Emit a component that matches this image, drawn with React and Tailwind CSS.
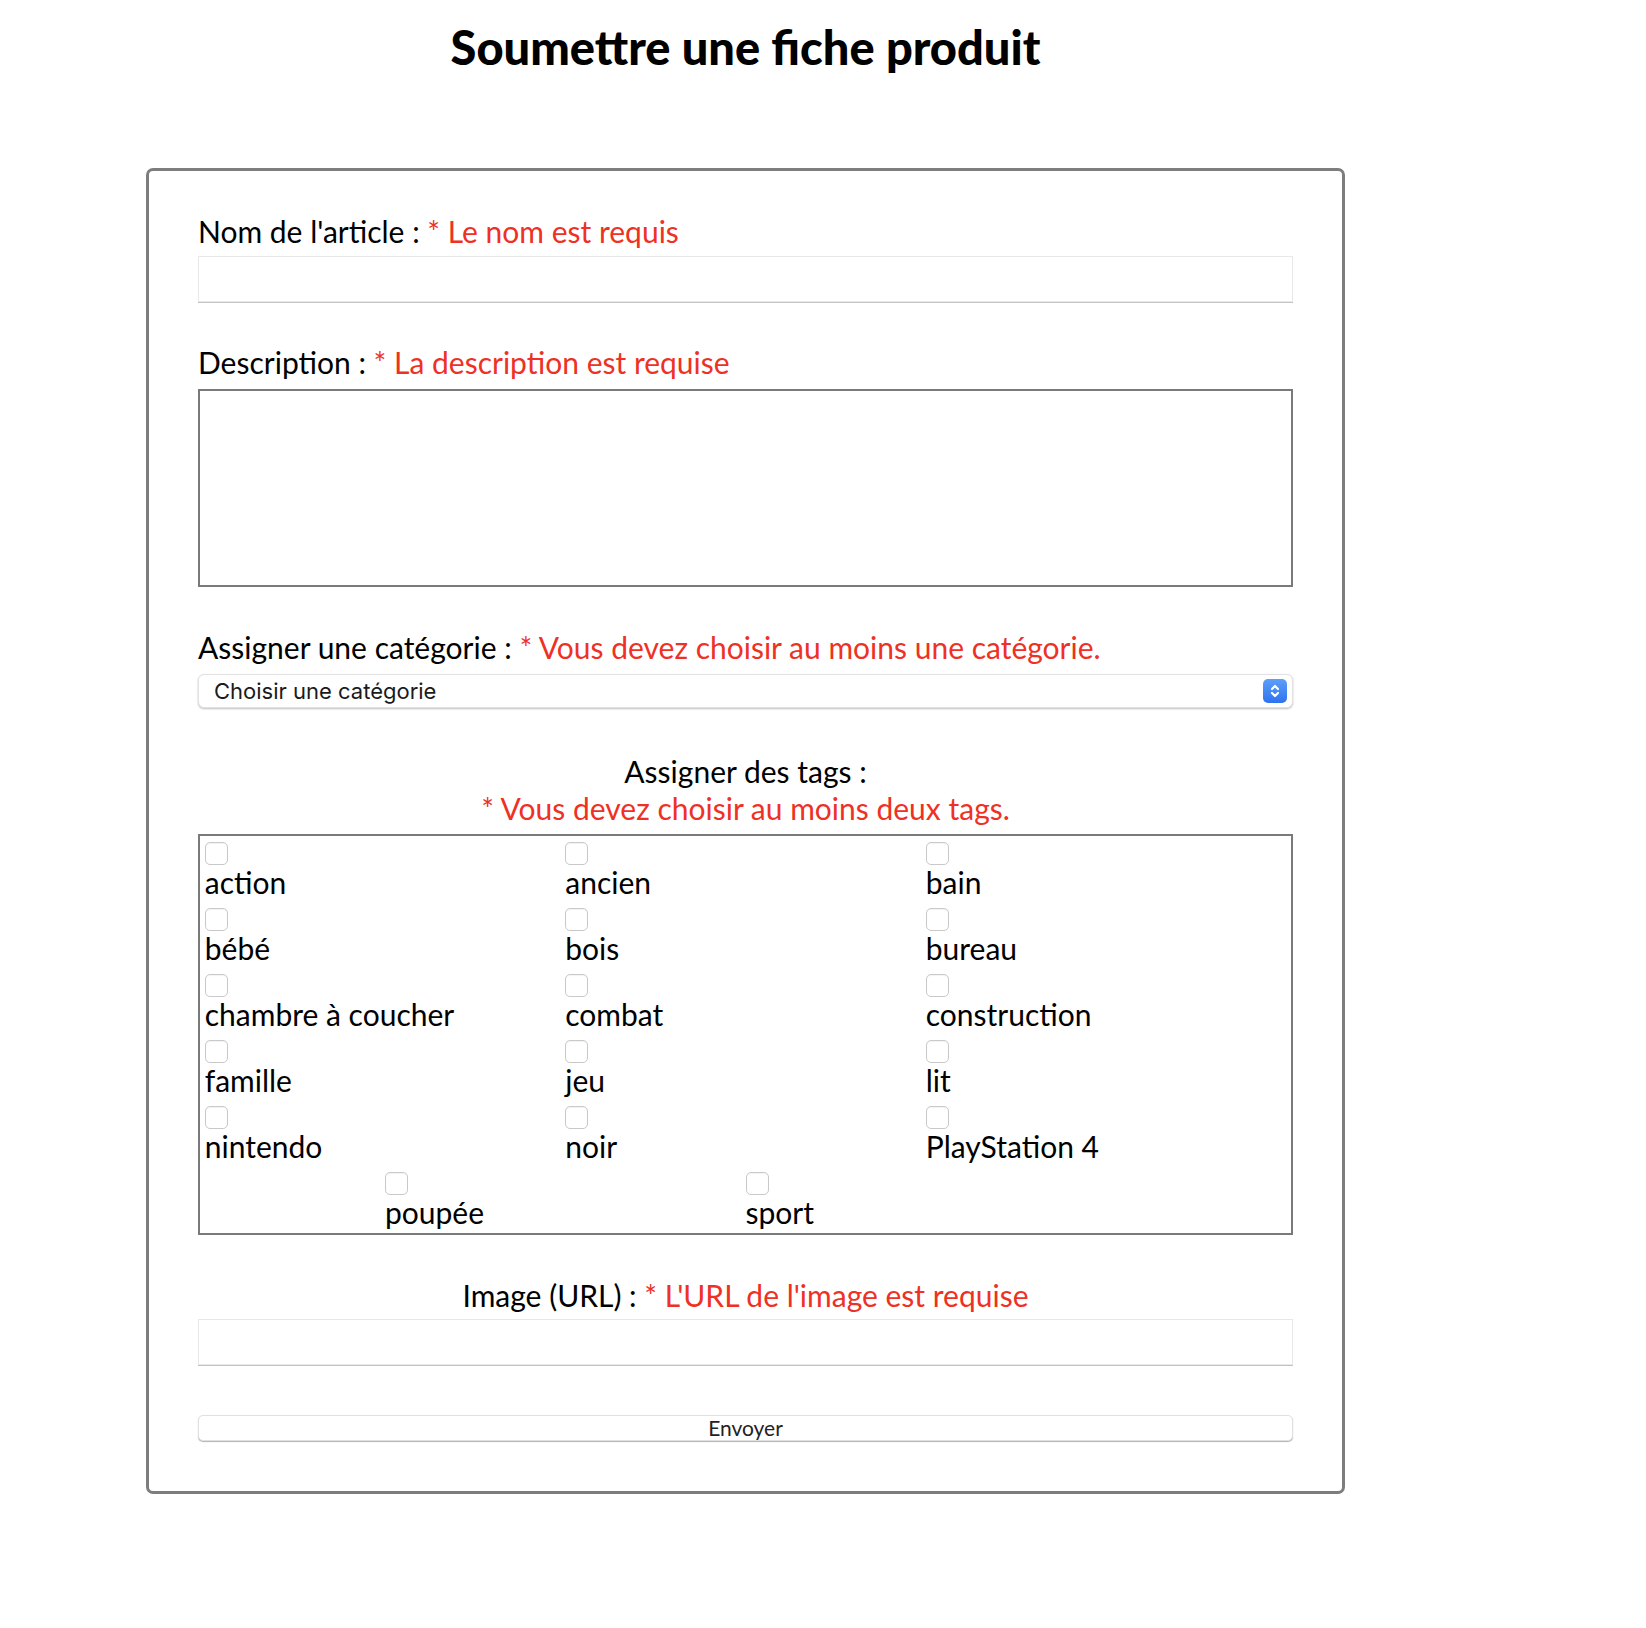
import React from "react";

const tags = [
  "action", "ancien", "bain",
  "bébé", "bois", "bureau",
  "chambre à coucher", "combat", "construction",
  "famille", "jeu", "lit",
  "nintendo", "noir", "PlayStation 4",
  "poupée", "sport",
];

function Label({ children, err, center }) {
  return (
    <div className={"h-[36px] text-[30px] leading-[36px] text-black whitespace-nowrap " + (center ? "text-center" : "")}>
      {children} <span className="text-[#ee3124]">{err}</span>
    </div>
  );
}

export default function App() {
  return (
    <div className="min-h-[1628px] bg-white font-['Lato',sans-serif] text-black">
      <h1 className="ml-[146px] w-[1199px] pt-[20px] text-center text-[47px] leading-[54px] font-black">
        Soumettre une fiche produit
      </h1>
      <form className="ml-[146px] mt-[94px] w-[1199px] border-[3px] border-[#7d7d7d] rounded-[7px] px-[49px] pt-[42px] pb-[50px]">
        <Label err="* Le nom est requis">Nom de l'article :</Label>
        <input type="text" className="mt-[7px] block w-full h-[46px] border border-[#e8e8e8] shadow-[0_1px_0_#c4c4c4] outline-none" />

        <div className="mt-[42px]">
          <Label err="* La description est requise">Description :</Label>
        </div>
        <textarea className="mt-[9px] block w-full h-[198px] border-2 border-[#7a7a7a] resize-none outline-none" />

        <div className="mt-[42px]">
          <Label err="* Vous devez choisir au moins une catégorie.">Assigner une catégorie :</Label>
        </div>
        <div className="mt-[9px] flex h-[34px] w-full items-center justify-between rounded-[6px] border border-[#e2e2e2] bg-white pl-[15px] pr-[5px] shadow-[0_1px_2px_rgba(0,0,0,0.25)]">
          <span className="font-['Inter',sans-serif] text-[22px] leading-[26px] text-[#1a1a1a]">Choisir une catégorie</span>
          <span className="flex h-[24px] w-[24px] items-center justify-center rounded-[5px] bg-gradient-to-b from-[#5d9ff9] to-[#2f72ef]">
            <svg width="12" height="16" viewBox="0 0 12 16" fill="none" stroke="white" strokeWidth="2.2" strokeLinecap="round" strokeLinejoin="round">
              <path d="M3 6 L6 3 L9 6" />
              <path d="M3 10 L6 13 L9 10" />
            </svg>
          </span>
        </div>

        <div className="mt-[45px]">
          <Label center>Assigner des tags :</Label>
          <div className="h-[38px] text-center text-[30px] leading-[38px] text-[#ee3124]">* Vous devez choisir au moins deux tags.</div>
        </div>
        <div className="mt-[7px] flex flex-wrap justify-center gap-y-[6px] border-2 border-[#7a7a7a] pt-[6px] pb-[1px]">
          {tags.map((t) => (
            <label key={t} className="w-[360.5px] h-[60px] flex flex-col items-start">
              <input type="checkbox" className="appearance-none m-0 h-[23px] w-[23px] rounded-[5px] border border-[#c9c9c9] bg-white shadow-[inset_0_1px_1px_rgba(0,0,0,0.05)]" />
              <span className="text-[30px] leading-[34px] whitespace-nowrap">{t}</span>
            </label>
          ))}
        </div>

        <div className="mt-[42px]">
          <Label center err="* L'URL de l'image est requise">Image (URL) :</Label>
        </div>
        <input type="text" className="mt-[6px] block w-full h-[46px] border border-[#e8e8e8] shadow-[0_1px_0_#c4c4c4] outline-none" />

        <button type="button" className="mt-[50px] block w-full h-[26px] rounded-[5px] border border-[#e0e0e0] bg-white text-[21px] leading-[24px] text-[#222] shadow-[0_1px_1px_rgba(0,0,0,0.3)]">
          Envoyer
        </button>
      </form>
    </div>
  );
}
